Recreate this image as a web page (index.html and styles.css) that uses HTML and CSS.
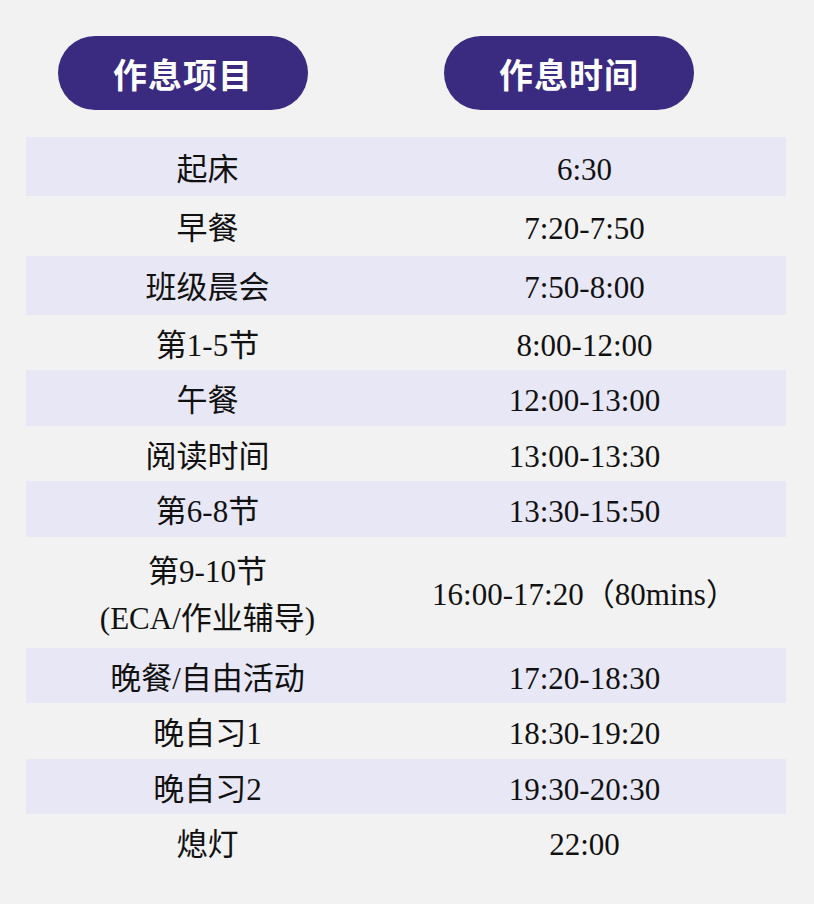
FILE: index.html
```html
<!DOCTYPE html>
<html lang="zh-CN">
<head>
<meta charset="utf-8">
<title>作息时间表</title>
<link rel="stylesheet" href="styles.css">
</head>
<body>
<div class="page">
  <div class="heads">
    <div class="pill">作息项目</div>
    <div class="pill">作息时间</div>
  </div>
  <div class="table">
    <div class="row tall stripe"><div class="cell">起床</div><div class="cell time">6:30</div></div>
    <div class="row tall"><div class="cell">早餐</div><div class="cell time">7:20-7:50</div></div>
    <div class="row tall stripe"><div class="cell">班级晨会</div><div class="cell time">7:50-8:00</div></div>
    <div class="row"><div class="cell">第1-5节</div><div class="cell time">8:00-12:00</div></div>
    <div class="row stripe"><div class="cell">午餐</div><div class="cell time">12:00-13:00</div></div>
    <div class="row"><div class="cell">阅读时间</div><div class="cell time">13:00-13:30</div></div>
    <div class="row stripe"><div class="cell">第6-8节</div><div class="cell time">13:30-15:50</div></div>
    <div class="row double"><div class="cell two">第9-10节<br>(ECA/作业辅导)</div><div class="cell time">16:00-17:20（80mins）</div></div>
    <div class="row stripe"><div class="cell">晚餐/自由活动</div><div class="cell time">17:20-18:30</div></div>
    <div class="row"><div class="cell">晚自习1</div><div class="cell time">18:30-19:20</div></div>
    <div class="row stripe"><div class="cell">晚自习2</div><div class="cell time">19:30-20:30</div></div>
    <div class="row"><div class="cell">熄灯</div><div class="cell time">22:00</div></div>
  </div>
</div>
</body>
</html>
```

FILE: styles.css
```css
html, body {
  margin: 0;
  padding: 0;
  background: #f2f2f2;
}
.page {
  width: 814px;
  height: 904px;
  padding-top: 36px;
  box-sizing: border-box;
}
.heads {
  display: flex;
  gap: 136px;
  padding-left: 58px;
}
.pill {
  width: 250px;
  height: 74px;
  border-radius: 37px;
  background: #3a2a80;
  color: #ffffff;
  font-family: "Noto Sans CJK SC", sans-serif;
  font-weight: 700;
  font-size: 34px;
  display: flex;
  align-items: center;
  justify-content: center;
  letter-spacing: 1px;
}
.table {
  margin: 27px 0 0 26px;
  width: 760px;
}
.row {
  display: grid;
  grid-template-columns: 363px 1fr;
  height: 55.5px;
  align-items: center;
}
.row.tall {
  height: 59.33px;
}
.row.double {
  height: 111px;
}
.stripe {
  background: #e8e7f5;
}
.cell {
  font-family: "Liberation Serif", "Noto Sans CJK SC", serif;
  font-size: 31px;
  color: #111111;
  text-align: center;
  line-height: 40px;
  padding-top: 6px;
  white-space: nowrap;
}
.cell.time {
  padding-right: 6px;
}
.cell.two {
  line-height: 47px;
}
```
